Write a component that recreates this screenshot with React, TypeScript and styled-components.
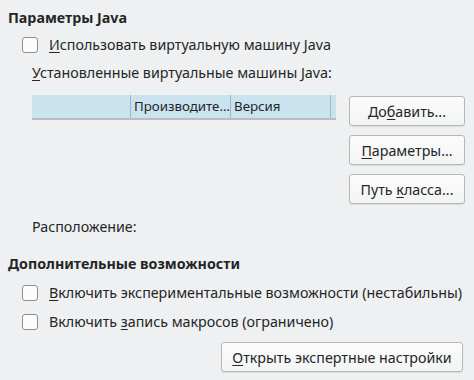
import React from 'react';
import styled, { createGlobalStyle } from 'styled-components';

const GlobalStyle = createGlobalStyle`
  html, body {
    margin: 0;
    padding: 0;
    background: #eff0f1;
  }
  body {
    font-family: "Noto Sans", "Open Sans", sans-serif;
    font-size: 14.25px;
    color: #232627;
  }
`

const Page = styled.div`
  width: 474px;
  height: 380px;
  box-sizing: border-box;
  padding: 9px 9px 0 8px;
  display: flex;
  flex-direction: column;
`

const SectionTitle = styled.div<{ $top?: number }>`
  font-weight: bold;
  line-height: 18px;
  margin-top: ${p => p.$top ?? 0}px;
`

const CheckRow = styled.label<{ $top?: number }>`
  display: flex;
  align-items: center;
  gap: 11px;
  margin-left: 14px;
  margin-top: ${p => p.$top ?? 0}px;
  line-height: 18px;
`

const Box = styled.span`
  width: 14px;
  height: 14px;
  border: 1px solid #8c8f92;
  border-radius: 3px;
  background: #fcfcfc;
  flex: none;
`

const U = styled.span`
  text-decoration: underline;
  text-underline-offset: 2px;
`

const Indented = styled.div<{ $top?: number }>`
  margin-left: 24px;
  margin-top: ${p => p.$top ?? 0}px;
  line-height: 18px;
`

const JvmArea = styled.div`
  display: flex;
  margin-left: 24px;
  margin-top: 13px;
  gap: 13px;
`

const Table = styled.div`
  width: 304px;
  height: 110px;
`

const HeaderRow = styled.div`
  display: flex;
  height: 23px;
  background: #cbe2ef;
  box-shadow: 0 2px 0 #b9bdc0;
  overflow: hidden;
`

const HeadCell = styled.div<{ $w: number }>`
  width: ${p => p.$w}px;
  flex: none;
  box-sizing: border-box;
  border-right: 1px solid #a3b8c6;
  padding-left: 3px;
  line-height: 23px;
  font-size: 13.3px;
  white-space: nowrap;
  overflow: hidden;
  &:last-child { border-right: none; }
`

const ClipMark = styled.span`
  display: block;
  width: 2px;
  height: 11px;
  margin: 6px 0 0 3px;
  background: #9a5a2a;
`

const ButtonColumn = styled.div`
  display: flex;
  flex-direction: column;
  gap: 9px;
  margin-top: 1px;
`

const Button = styled.button<{ $w?: number }>`
  width: ${p => p.$w ?? 116}px;
  height: 30px;
  box-sizing: border-box;
  border: 1px solid #b5b7b9;
  border-radius: 3px;
  background: linear-gradient(#fbfbfb, #f3f4f4);
  box-shadow: 0 1px 1px rgba(0, 0, 0, 0.08);
  font-family: inherit;
  font-size: 14.25px;
  color: #232627;
  padding: 0;
`

const Footer = styled.div`
  display: flex;
  justify-content: flex-end;
  margin-top: 11px;
  padding-right: 2px;
`

const App: React.FC = () => {
  return (
    <>
      <GlobalStyle />
      <Page>
        <SectionTitle>Параметры Java</SectionTitle>
        <CheckRow $top={9}>
          <Box />
          <span><U>И</U>спользовать виртуальную машину Java</span>
        </CheckRow>
        <Indented $top={10}><U>У</U>становленные виртуальные машины Java:</Indented>
        <JvmArea>
          <Table>
            <HeaderRow>
              <HeadCell $w={99} />
              <HeadCell $w={100}>Производите…</HeadCell>
              <HeadCell $w={100}>Версия</HeadCell>
              <HeadCell $w={5}><ClipMark /></HeadCell>
            </HeaderRow>
          </Table>
          <ButtonColumn>
            <Button>До<U>б</U>авить...</Button>
            <Button><U>П</U>араметры...</Button>
            <Button>Путь <U>к</U>ласса...</Button>
          </ButtonColumn>
        </JvmArea>
        <Indented $top={13}>Расположение:</Indented>
        <SectionTitle $top={19}>Дополнительные возможности</SectionTitle>
        <CheckRow $top={11}>
          <Box />
          <span><U>В</U>ключить экспериментальные возможности (нестабильны)</span>
        </CheckRow>
        <CheckRow $top={11}>
          <Box />
          <span>Включить <U>з</U>апись макросов (ограничено)</span>
        </CheckRow>
        <Footer>
          <Button $w={242}><U>О</U>ткрыть экспертные настройки</Button>
        </Footer>
      </Page>
    </>
  )
}

export default App;
